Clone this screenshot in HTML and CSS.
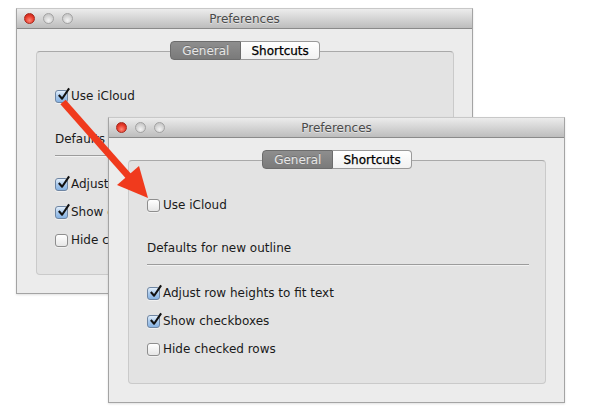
FILE: index.html
```html
<!DOCTYPE html>
<html>
<head>
<meta charset="utf-8">
<link rel="stylesheet" href="styles.css">
</head>
<body>
<div class="canvas">
  <div class="window w-back">
    <div class="titlebar">
      <div class="lights"><span class="light red"></span><span class="light"></span><span class="light"></span></div>
      <div class="title">Preferences</div>
    </div>
    <div class="body">
      <div class="tabs"><span class="tab sel">General</span><span class="tab">Shortcuts</span></div>
      <div class="group">
        <div class="row r-icloud"><span class="cb on"><svg viewBox="0 0 16 16"><path d="M3 8 L6.5 12 L14 1"/></svg></span><span>Use iCloud</span></div>
        <div class="row r-head">Defaults for new outline</div>
        <div class="sep"></div>
        <div class="row r-first"><span class="cb on"><svg viewBox="0 0 16 16"><path d="M3 8 L6.5 12 L14 1"/></svg></span><span>Adjust row heights to fit text</span></div>
        <div class="row r-next"><span class="cb on"><svg viewBox="0 0 16 16"><path d="M3 8 L6.5 12 L14 1"/></svg></span><span>Show checkboxes</span></div>
        <div class="row r-next"><span class="cb"></span><span>Hide checked rows</span></div>
      </div>
    </div>
  </div>
  <div class="window w-front">
    <div class="titlebar">
      <div class="lights"><span class="light red"></span><span class="light"></span><span class="light"></span></div>
      <div class="title">Preferences</div>
    </div>
    <div class="body">
      <div class="tabs"><span class="tab sel">General</span><span class="tab">Shortcuts</span></div>
      <div class="group">
        <div class="row r-icloud"><span class="cb"></span><span>Use iCloud</span></div>
        <div class="row r-head">Defaults for new outline</div>
        <div class="sep"></div>
        <div class="row r-first"><span class="cb on"><svg viewBox="0 0 16 16"><path d="M3 8 L6.5 12 L14 1"/></svg></span><span>Adjust row heights to fit text</span></div>
        <div class="row r-next"><span class="cb on"><svg viewBox="0 0 16 16"><path d="M3 8 L6.5 12 L14 1"/></svg></span><span>Show checkboxes</span></div>
        <div class="row r-next"><span class="cb"></span><span>Hide checked rows</span></div>
      </div>
    </div>
  </div>
  <svg class="arrow" width="590" height="416" viewBox="0 0 590 416">
    <line x1="63" y1="102" x2="131" y2="179" stroke="#f03a1d" stroke-width="7"/>
    <polygon points="148,198 117,185 139,166" fill="#f03a1d"/>
  </svg>
</div>
</body>
</html>
```

FILE: styles.css
```css
html, body {
  margin: 0;
  padding: 0;
  background: #ffffff;
}

.canvas {
  position: relative;
  width: 590px;
  height: 416px;
  overflow: hidden;
  font-family: "DejaVu Sans", "Liberation Sans", sans-serif;
  font-size: 12px;
  color: #1a1a1a;
}

.window {
  position: absolute;
  width: 457px;
  height: 286px;
  box-sizing: border-box;
  border: 1px solid #a4a4a4;
  border-top-color: #c8c8c8;
  background: #ececec;
  display: flex;
  flex-direction: column;
  box-shadow: 0 1px 2px rgba(0,0,0,0.12);
}

.w-back { left: 16px; top: 8px; }
.w-front { left: 108px; top: 117px; }

.titlebar {
  position: relative;
  height: 20px;
  box-sizing: border-box;
  border-bottom: 1px solid #8a8a8a;
  background: linear-gradient(#ececec, #d2d2d2 55%, #bdbdbd);
  display: flex;
  align-items: center;
  justify-content: center;
}

.lights {
  position: absolute;
  left: 7px;
  top: 4px;
  display: flex;
  gap: 8px;
}

.light {
  width: 11px;
  height: 11px;
  box-sizing: border-box;
  border-radius: 50%;
  border: 1px solid #a2a2a2;
  background: radial-gradient(circle at 50% 70%, #f4f4f4, #d0d0d0 60%, #bcbcbc);
}

.light.red {
  border-color: #a8281c;
  background: radial-gradient(circle at 50% 70%, #ff8a7a, #e83a2a 55%, #b6251a);
}

.title {
  font-size: 12px;
  color: #4a4a4a;
  text-shadow: 0 1px 0 rgba(255,255,255,0.5);
}

.body {
  flex: 1;
  display: flex;
  flex-direction: column;
  padding: 12px 18px 18px 19px;
}

.tabs {
  position: relative;
  z-index: 1;
  display: flex;
  justify-content: center;
  height: 19px;
}

.tab {
  display: flex;
  align-items: center;
  box-sizing: border-box;
  height: 19px;
  padding: 0 10px;
  border: 1px solid #9a9a9a;
  border-left: none;
  border-radius: 0 4px 4px 0;
  background: linear-gradient(#ffffff, #f1f1f1);
  color: #000;
  font-size: 12px;
  -webkit-text-stroke: 0.25px #000;
}

.tab.sel {
  border: 1px solid #6c6c6c;
  border-radius: 4px 0 0 4px;
  background: linear-gradient(#8e8e8e, #7a7a7a);
  color: #e6e6e6;
  padding: 0 11px;
  -webkit-text-stroke: 0;
  text-shadow: 0 -1px 0 rgba(0,0,0,0.2);
}

.group {
  flex: 1;
  margin-top: -9px;
  border: 1px solid #cacaca;
  border-top-color: #a9a9a9;
  border-radius: 4px;
  background: #e3e3e3;
  display: flex;
  flex-direction: column;
  padding: 0 16px 0 18px;
}

.row {
  height: 16px;
  display: flex;
  align-items: center;
  gap: 3px;
  white-space: nowrap;
}

.r-icloud { margin-top: 36px; }
.r-head { margin-top: 27px; }
.r-first { margin-top: 19px; }
.r-next { margin-top: 12px; }

.sep {
  margin-top: 8px;
  height: 1px;
  background: #9c9c9c;
  border-bottom: 1px solid #f2f2f2;
}

.cb {
  position: relative;
  flex: none;
  width: 13px;
  height: 13px;
  box-sizing: border-box;
  border: 1px solid #8e8e8e;
  border-radius: 3px;
  background: linear-gradient(#ffffff, #e6e6e6);
  box-shadow: 0 1px 0 rgba(255,255,255,0.5);
}

.cb.on {
  border-color: #6f86a3;
  background: linear-gradient(#e3effb, #a9c9ec 50%, #86b2e2);
}

.cb svg {
  position: absolute;
  left: 0;
  top: -4px;
  width: 15px;
  height: 16px;
  overflow: visible;
}

.cb svg path {
  fill: none;
  stroke: #111;
  stroke-width: 2.2;
  stroke-linejoin: round;
}

.arrow {
  position: absolute;
  left: 0;
  top: 0;
  z-index: 5;
}
```
